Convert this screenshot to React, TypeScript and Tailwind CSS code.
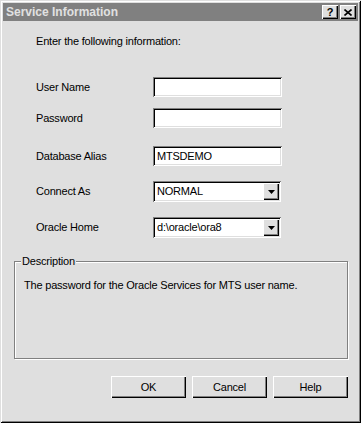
import React from "react";

const sunken =
  "bg-white shadow-[inset_1px_1px_#808080,inset_-1px_-1px_#ffffff,inset_2px_2px_#000000,inset_-2px_-2px_#dfdfdf]";
const raised =
  "bg-[#dfdfdf] shadow-[inset_1px_1px_#ffffff,inset_-1px_-1px_#000000,inset_-2px_-2px_#808080]";

const TextRow = ({ label, value, className }: { label: string; value?: string; className: string }) => (
  <div className={`flex items-center ${className}`}>
    <div className="w-[117px]">{label}</div>
    <div className={`w-[129px] h-[20px] ${sunken} flex items-center pl-[4px]`}>{value}</div>
  </div>
);

const SelectRow = ({ label, value, className }: { label: string; value: string; className: string }) => (
  <div className={`flex items-center ${className}`}>
    <div className="w-[117px]">{label}</div>
    <div className={`w-[128px] h-[21px] ${sunken} flex items-center justify-between pl-[4px] pr-[2px]`}>
      <span>{value}</span>
      <div className={`w-[16px] h-[17px] ${raised} flex items-center justify-center`}>
        <svg width="7" height="4" viewBox="0 0 7 4">
          <path d="M0 0H7L3.5 4Z" fill="#000" />
        </svg>
      </div>
    </div>
  </div>
);

const Btn = ({ children }: { children: React.ReactNode }) => (
  <div className={`w-[75px] h-[22px] ${raised} flex items-center justify-center`}>{children}</div>
);

export default function App() {
  return (
    <div
      className="w-[361px] h-[423px] bg-[#dfdfdf] text-black text-[11px] tracking-[-0.2px] shadow-[inset_1px_1px_#dfdfdf,inset_-1px_-1px_#000000,inset_2px_2px_#ffffff,inset_-2px_-2px_#808080] pt-[3px] px-[3px] flex flex-col"
      style={{ fontFamily: '"Liberation Sans", Arial, sans-serif' }}
    >
      <div className="h-[18px] bg-[#808080] flex items-center justify-between pl-[3px] pr-[2px]">
        <span className="text-[12px] font-bold tracking-normal text-[#e0e0e0]">Service Information</span>
        <div className="flex gap-[2px]">
          <div className={`w-[16px] h-[14px] ${raised} flex items-center justify-center text-[11px] font-bold leading-none`}>?</div>
          <div className={`w-[16px] h-[14px] ${raised} flex items-center justify-center`}>
            <svg width="8" height="7" viewBox="0 0 8 7">
              <path d="M0.5 0.5L7.5 6.5M7.5 0.5L0.5 6.5" stroke="#000" strokeWidth="1.6" />
            </svg>
          </div>
        </div>
      </div>

      <div className="pl-[33px] mt-[13px] leading-[14px]">Enter the following information:</div>

      <div className="pl-[33px] flex flex-col">
        <TextRow label="User Name" className="mt-[29px]" />
        <TextRow label="Password" className="mt-[11px]" />
        <TextRow label="Database Alias" value="MTSDEMO" className="mt-[18px]" />
        <SelectRow label="Connect As" value="NORMAL" className="mt-[15px]" />
        <SelectRow label="Oracle Home" value="d:\oracle\ora8" className="mt-[15px]" />
      </div>

      <div className="relative mt-[23px] ml-[11px] w-[334px] h-[98px] border border-[#808080] shadow-[1px_1px_#ffffff,inset_1px_1px_#ffffff]">
        <span className="absolute -top-[8px] left-[6px] bg-[#dfdfdf] px-[1px] leading-[14px]">Description</span>
        <div className="pl-[9px] pt-[15px]">The password for the Oracle Services for MTS user name.</div>
      </div>

      <div className="flex justify-end gap-[6px] mt-[17px] pr-[10px]">
        <Btn>OK</Btn>
        <Btn>Cancel</Btn>
        <Btn>Help</Btn>
      </div>
    </div>
  );
}
